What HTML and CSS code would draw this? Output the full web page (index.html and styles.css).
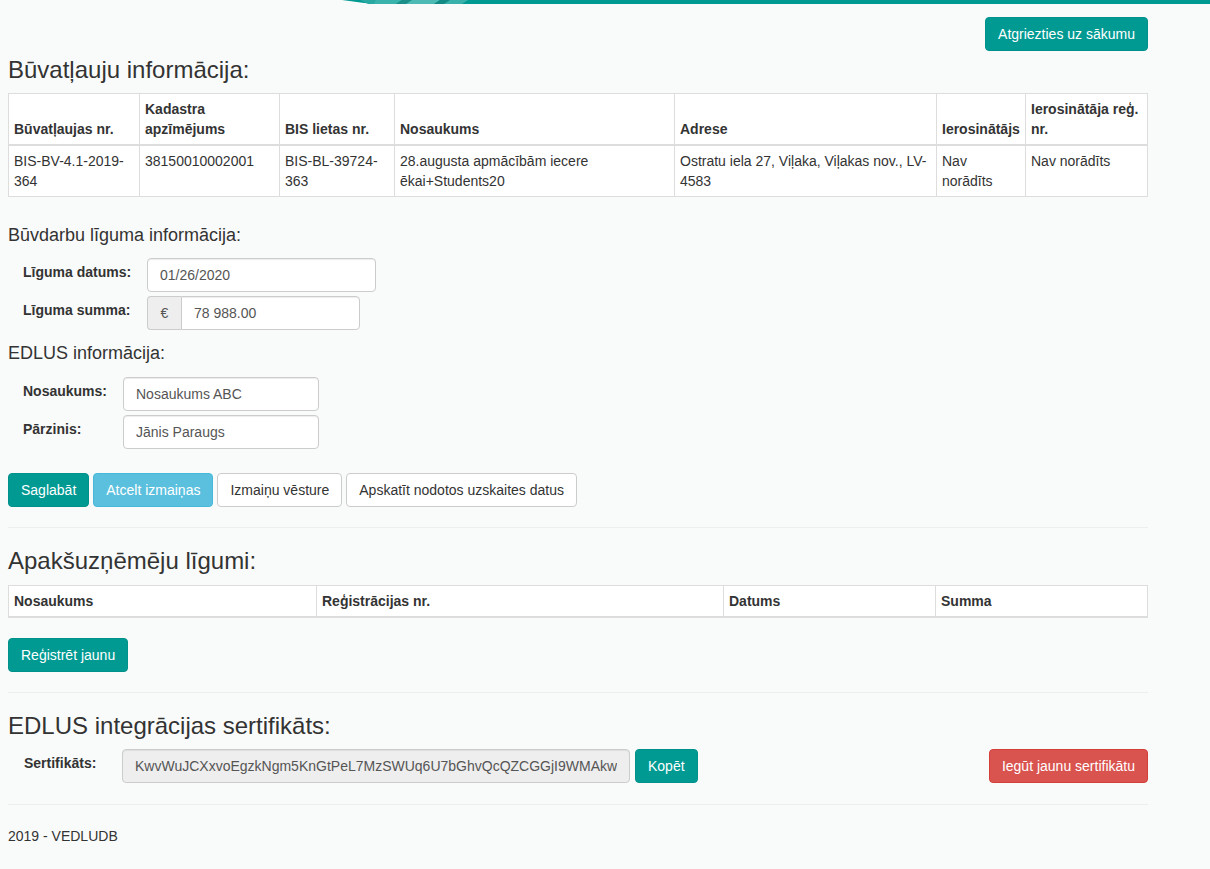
FILE: index.html
```html
<!DOCTYPE html>
<html lang="lv">
<head>
<meta charset="utf-8">
<title>Būvatļauju informācija</title>
<link rel="stylesheet" href="styles.css">
</head>
<body>
<div class="topbar">
  <svg class="topbar-art" width="870" height="5" viewBox="0 0 870 5" xmlns="http://www.w3.org/2000/svg">
    <path d="M2 0 L870 0 L870 4 L40 4 Q20 3 2 0 Z" fill="#009a93"/>
    <path d="M20 0 L40 0 L34 4 L28 4 Q24 2 20 0 Z" fill="#2aa9a2"/>
    <path d="M36 0 L62 0 L56 4 L34 4 Z" fill="#3bb3ad"/>
    <path d="M62 0 L72 0 L66 4 L56 4 Z" fill="#1b8f88"/>
    <path d="M72 0 L100 0 L94 4 L66 4 Z" fill="#4dbab4"/>
    <path d="M100 0 L110 0 L104 4 L94 4 Z" fill="#138a83"/>
    <path d="M110 0 L128 0 L122 4 L104 4 Z" fill="#39b0aa"/>
  </svg>
</div>
<div class="container">
  <div class="top-actions">
    <a class="btn btn-teal" href="#">Atgriezties uz sākumu</a>
  </div>

  <h3 class="h3 first">Būvatļauju informācija:</h3>
  <table class="table t-permit">
    <thead>
      <tr>
        <th class="c1">Būvatļaujas nr.</th>
        <th class="c2">Kadastra apzīmējums</th>
        <th class="c3">BIS lietas nr.</th>
        <th class="c4">Nosaukums</th>
        <th class="c5">Adrese</th>
        <th class="c6">Ierosinātājs</th>
        <th class="c7">Ierosinātāja reģ. nr.</th>
      </tr>
    </thead>
    <tbody>
      <tr>
        <td>BIS-BV-4.1-2019-364</td>
        <td>38150010002001</td>
        <td>BIS-BL-39724-363</td>
        <td>28.augusta apmācībām iecere ēkai+Students20</td>
        <td>Ostratu iela 27, Viļaka, Viļakas nov., LV-4583</td>
        <td>Nav norādīts</td>
        <td>Nav norādīts</td>
      </tr>
    </tbody>
  </table>

  <h4 class="h4 contract">Būvdarbu līguma informācija:</h4>
  <div class="form-row">
    <label class="lbl lbl-wide">Līguma datums:</label>
    <input class="input in-date" type="text" value="01/26/2020">
  </div>
  <div class="form-row">
    <label class="lbl lbl-wide">Līguma summa:</label>
    <div class="input-group">
      <span class="addon">€</span>
      <input class="input in-sum" type="text" value="78 988.00">
    </div>
  </div>

  <h4 class="h4 edlus">EDLUS informācija:</h4>
  <div class="form-row">
    <label class="lbl lbl-mid">Nosaukums:</label>
    <input class="input in-name" type="text" value="Nosaukums ABC">
  </div>
  <div class="form-row">
    <label class="lbl lbl-mid">Pārzinis:</label>
    <input class="input in-name" type="text" value="Jānis Paraugs">
  </div>

  <div class="btn-row">
    <a class="btn btn-teal" href="#">Saglabāt</a>
    <a class="btn btn-info" href="#">Atcelt izmaiņas</a>
    <a class="btn btn-default" href="#">Izmaiņu vēsture</a>
    <a class="btn btn-default" href="#">Apskatīt nodotos uzskaites datus</a>
  </div>

  <hr class="hr">

  <h3 class="h3 sub-title">Apakšuzņēmēju līgumi:</h3>
  <table class="table t-sub">
    <thead>
      <tr>
        <th class="s1">Nosaukums</th>
        <th class="s2">Reģistrācijas nr.</th>
        <th class="s3">Datums</th>
        <th class="s4">Summa</th>
      </tr>
    </thead>
  </table>
  <div class="single-action">
    <a class="btn btn-teal" href="#">Reģistrēt jaunu</a>
  </div>

  <hr class="hr">

  <h3 class="h3 sub-title">EDLUS integrācijas sertifikāts:</h3>
  <div class="cert-row">
    <label class="lbl lbl-cert">Sertifikāts:</label>
    <input class="input in-cert" type="text" readonly value="KwvWuJCXxvoEgzkNgm5KnGtPeL7MzSWUq6U7bGhvQcQZCGGjI9WMAkw">
    <a class="btn btn-teal btn-copy" href="#">Kopēt</a>
    <span class="spacer"></span>
    <a class="btn btn-danger" href="#">Iegūt jaunu sertifikātu</a>
  </div>

  <hr class="hr hr-end">
  <footer class="footer">2019 - VEDLUDB</footer>
</div>
</body>
</html>
```

FILE: styles.css
```css
* { box-sizing: border-box; }

html, body {
  margin: 0;
  padding: 0;
  background: #f9fbfa;
}

body {
  font-family: "Liberation Sans", Arial, sans-serif;
  font-size: 14px;
  line-height: 20px;
  color: #333;
}

.topbar {
  position: relative;
  height: 4px;
}

.topbar-art {
  position: absolute;
  left: 340px;
  top: 0;
  display: block;
}

.container {
  margin-left: 8px;
  width: 1140px;
}

.top-actions {
  display: flex;
  justify-content: flex-end;
  padding-top: 13px;
}

.btn {
  display: inline-block;
  height: 34px;
  padding: 6px 12px;
  font-size: 14px;
  line-height: 20px;
  border: 1px solid transparent;
  border-radius: 4px;
  text-decoration: none;
  white-space: nowrap;
  text-align: center;
}

.btn-teal {
  background: #009a93;
  border-color: #00918a;
  color: #fff;
}

.btn-info {
  background: #5bc0de;
  border-color: #46b8da;
  color: #fff;
}

.btn-default {
  background: #fff;
  border-color: #ccc;
  color: #333;
}

.btn-danger {
  background: #d9534f;
  border-color: #d43f3a;
  color: #fff;
}

.h3 {
  font-size: 24px;
  font-weight: 400;
  line-height: 1.1;
  margin: 20px 0 10px;
}

.h3.first {
  margin-top: 6px;
}

.h3.sub-title {
  margin-top: 19px;
}

.h4 {
  font-size: 18px;
  font-weight: 400;
  line-height: 20px;
  margin: 0;
}

.h4.contract {
  margin-top: 28px;
  margin-bottom: 13px;
}

.h4.edlus {
  margin-top: 13px;
  margin-bottom: 14px;
}

.table {
  width: 1139px;
  table-layout: fixed;
  border-collapse: collapse;
  background: #fff;
  margin: 0 0 20px;
}

.table th,
.table td {
  border: 1px solid #ddd;
  padding: 5px;
  text-align: left;
  vertical-align: top;
}

.table th {
  font-weight: 700;
  vertical-align: bottom;
  border-bottom: 2px solid #ddd;
}

.c1 { width: 131px; }
.c2 { width: 140px; }
.c3 { width: 115px; }
.c4 { width: 280px; }
.c5 { width: 262px; }
.c6 { width: 89px; }
.c7 { width: 122px; }

.s1 { width: 308px; }
.s2 { width: 407px; }
.s3 { width: 212px; }
.s4 { width: 212px; }

.form-row {
  display: flex;
  align-items: flex-start;
  margin-bottom: 4px;
}

.lbl {
  font-weight: 700;
  padding-top: 4px;
  padding-left: 15px;
  flex: none;
}

.lbl-wide { width: 139px; }
.lbl-mid { width: 115px; }
.lbl-cert { width: 114px; padding-left: 16px; }

.input {
  display: block;
  height: 34px;
  padding: 6px 12px;
  font-family: "Liberation Sans", Arial, sans-serif;
  font-size: 14px;
  line-height: 20px;
  color: #555;
  background: #fff;
  border: 1px solid #ccc;
  border-radius: 4px;
  box-shadow: inset 0 1px 1px rgba(0, 0, 0, 0.075);
}

.in-date { width: 229px; }
.in-name { width: 196px; }

.input-group {
  display: flex;
  width: 213px;
  flex: none;
}

.addon {
  flex: none;
  width: 34px;
  height: 34px;
  padding: 6px 0;
  text-align: center;
  color: #555;
  background: #eee;
  border: 1px solid #ccc;
  border-right: 0;
  border-radius: 4px 0 0 4px;
}

.input-group .in-sum {
  flex: 1 1 0;
  width: 0;
  min-width: 0;
  border-radius: 0 4px 4px 0;
}

.btn-row {
  display: flex;
  gap: 4px;
  margin-top: 24px;
}

.hr {
  border: 0;
  border-top: 1px solid #eee;
  margin: 20px 0;
  height: 0;
}

.hr-end {
  margin-top: 21px;
}

.single-action {
  display: flex;
}

.cert-row {
  display: flex;
  align-items: flex-start;
}

.in-cert {
  width: 508px;
  background: #eee;
}

.btn-copy {
  margin-left: 5px;
}

.spacer {
  flex: 1;
}

.footer {
  padding-top: 1px;
  padding-bottom: 20px;
}
```
